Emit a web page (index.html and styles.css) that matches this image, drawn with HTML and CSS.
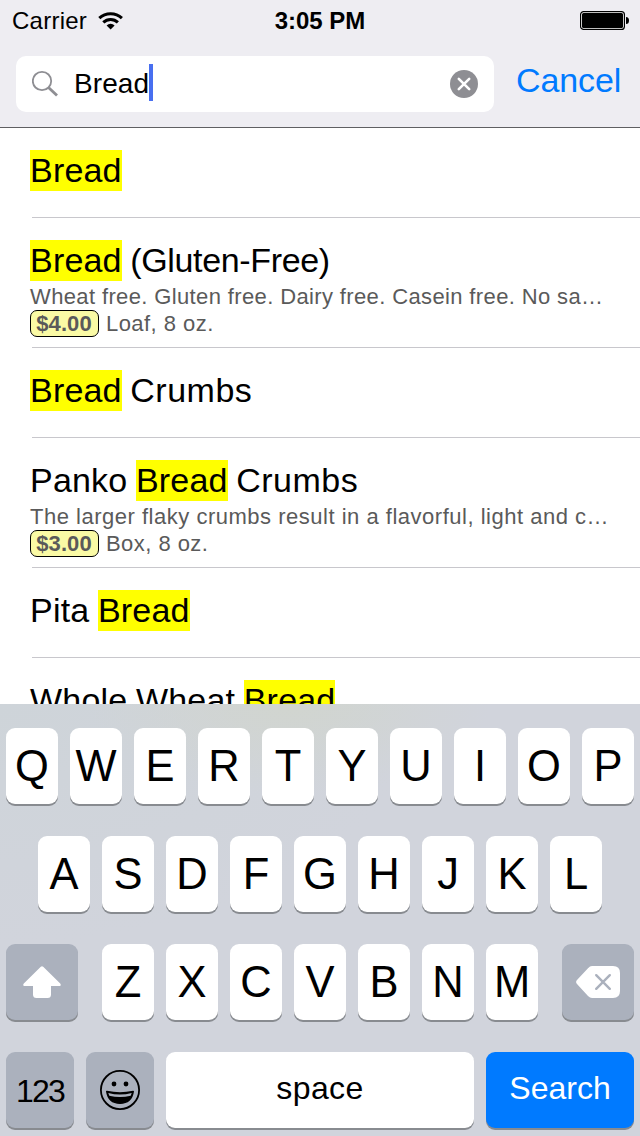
FILE: index.html
```html
<!DOCTYPE html>
<html lang="en">
<head>
<meta charset="utf-8">
<title>Search</title>
<link rel="stylesheet" href="styles.css">
</head>
<body>
<div class="screen">
  <header class="top">
    <div class="status">
      <div class="carrier"><span>Carrier</span>
        <svg class="wifi" width="26" height="20" viewBox="0 0 26 20"><g fill="none" stroke="#000" stroke-width="3"><path d="M1.3 7.2A16.3 16.3 0 0 1 23.9 7.2"/><path d="M5.3 11.4A10.4 10.4 0 0 1 19.9 11.4"/></g><path d="M8.6 14.4A5.7 5.7 0 0 1 16.6 14.4L12.6 18.6Z"/></svg>
      </div>
      <div class="time">3:05 PM</div>
      <svg class="battery" width="50" height="20" viewBox="0 0 50 20"><rect x=".6" y=".6" width="43.8" height="17.8" rx="3" fill="#fff" stroke="#000" stroke-width="1.2"/><rect x="2" y="2" width="41" height="15" rx="1.5"/><path d="M46 6Q49 6 49 9.5T46 13Z"/></svg>
    </div>
    <div class="search-row">
      <div class="field">
        <svg class="glass" width="28" height="28" viewBox="0 0 28 28" fill="none" stroke="#8e8e93"><circle cx="10" cy="11" r="9.2" stroke-width="1.8"/><path d="M16.5 17.5L25 25.5" stroke-width="2.8"/></svg>
        <span class="query">Bread</span><span class="caret"></span>
        <svg class="clear" width="28" height="28" viewBox="0 0 28 28"><circle cx="14" cy="14" r="14" fill="#8e8e93"/><path d="M8.8 8.8L19.2 19.2M19.2 8.8L8.8 19.2" stroke="#fff" stroke-width="2.6" stroke-linecap="round"/></svg>
      </div>
      <span class="cancel">Cancel</span>
    </div>
  </header>
  <ul class="results">
    <li class="item"><div class="title"><mark>Bread</mark></div></li>
    <li class="item tall">
      <div class="title"><mark>Bread</mark> <span class="snug">(Gluten-Free)</span></div>
      <div class="note note-snug">Wheat free. Gluten free. Dairy free. Casein free. No sa…</div>
      <div class="info"><span class="price">$4.00</span><span>Loaf, 8 oz.</span></div>
    </li>
    <li class="item"><div class="title"><mark>Bread</mark> <span class="loose">Crumbs</span></div></li>
    <li class="item tall">
      <div class="title">Panko <mark>Bread</mark> <span class="loose">Crumbs</span></div>
      <div class="note">The larger flaky crumbs result in a flavorful, light and c…</div>
      <div class="info"><span class="price">$3.00</span><span>Box, 8 oz.</span></div>
    </li>
    <li class="item"><div class="title">Pita <mark>Bread</mark></div></li>
    <li class="item"><div class="title">Whole Wheat <mark>Bread</mark></div></li>
  </ul>
  <div class="keyboard">
    <div class="keys"><span class="key">Q</span><span class="key">W</span><span class="key">E</span><span class="key">R</span><span class="key">T</span><span class="key">Y</span><span class="key">U</span><span class="key">I</span><span class="key">O</span><span class="key">P</span></div>
    <div class="keys"><span class="key">A</span><span class="key">S</span><span class="key">D</span><span class="key">F</span><span class="key">G</span><span class="key">H</span><span class="key">J</span><span class="key">K</span><span class="key">L</span></div>
    <div class="keys spread">
      <span class="key wide gray"><svg width="38" height="32" viewBox="0 0 38 32"><path fill="#fff" d="M17.8 .8Q19 -.3 20.2 .8L37.2 17.6Q38.6 19.6 36.6 20H28V28.5Q28 32 24.5 32H13.5Q10 32 10 28.5V20H1.4Q-.6 19.6 .8 17.6Z"/></svg></span>
      <div class="letters"><span class="key">Z</span><span class="key">X</span><span class="key">C</span><span class="key">V</span><span class="key">B</span><span class="key">N</span><span class="key">M</span></div>
      <span class="key wide gray"><svg width="44" height="32" viewBox="0 0 44 32"><path fill="#fff" d="M16 0H37Q44 0 44 7V25Q44 32 37 32H16Q14 32 12 30L1 18Q-.8 16 1 14L12 2.2Q14 0 16 0Z"/><path d="M20.2 9.2L33.8 22.8M33.8 9.2L20.2 22.8" stroke="#abb1bd" stroke-width="2.4" stroke-linecap="round"/></svg></span>
    </div>
    <div class="keys bottom">
      <span class="key gray num">123</span>
      <span class="key gray"><svg width="40" height="40" viewBox="0 0 40 40"><circle cx="20" cy="20" r="19.1" fill="none" stroke="#000" stroke-width="1.8"/><circle cx="14" cy="14" r="2.4"/><circle cx="26" cy="14" r="2.4"/><path d="M6.8 21.5Q20 24.5 33.2 21.5Q31.5 33.2 20 33.2T6.8 21.5Z" fill="#000" stroke="#000" stroke-width="1.6" stroke-linejoin="round"/><path d="M8.3 23Q20 26.2 31.7 23L30.7 25.7Q20 28.4 9.3 25.7Z" fill="#abb1bd"/></svg></span>
      <span class="key space">space</span>
      <span class="key go">Search</span>
    </div>
  </div>
</div>
</body>
</html>
```
FILE: styles.css
```css
* { box-sizing: border-box; }
body { margin: 0; font-family: "Liberation Sans", Arial, sans-serif; color: #000; }
.screen { display: flex; flex-direction: column; width: 640px; height: 1136px; overflow: hidden; background: #fff; }
.top { flex: none; height: 128px; background: #eeedf2; border-bottom: 1px solid #5f5f62; }
.status { display: grid; grid-template-columns: 1fr auto 1fr; height: 40px; padding: 0 10px 0 12px; align-items: center; font-size: 24px; }
.carrier { display: flex; align-items: center; gap: 11px; letter-spacing: .25px; line-height: 42px; }
.wifi { margin-top: -1px; }
.time { font-weight: bold; line-height: 42px; margin-left: -2px; }
.battery { justify-self: end; }
.search-row { display: flex; margin-top: 16px; padding-left: 16px; }
.field { display: flex; align-items: center; width: 478px; height: 56px; padding: 0 16px; border-radius: 10px; background: #fff; }
.query { margin-left: 14px; font-size: 28px; letter-spacing: .1px; }
.caret { width: 4px; height: 37px; margin: -3px 0 0 0; background: #486ff0; }
.clear { margin-left: auto; }
.cancel { margin-left: 22px; font-size: 34px; letter-spacing: -.1px; line-height: 49px; color: #007aff; }
.results { flex: none; height: 576px; margin: 0; padding: 0; overflow: hidden; list-style: none; }
.item { height: 90px; padding: 22px 0 0 30px; background: linear-gradient(#c8c7cc, #c8c7cc) 32px 100% / 100% 1px no-repeat; }
.tall { height: 130px; }
.title { height: 41px; font-size: 34px; line-height: 41px; letter-spacing: .2px; word-spacing: -1.1px; white-space: nowrap; }
.snug { letter-spacing: -.35px; }
.loose { letter-spacing: .5px; }
mark { display: inline-block; background: #ff0; color: inherit; }
.note { margin-top: 2px; height: 27px; font-size: 22px; line-height: 27px; letter-spacing: .51px; color: #5a5a5a; white-space: nowrap; }
.note-snug { letter-spacing: .37px; }
.info { display: flex; gap: 7px; height: 27px; font-size: 22px; line-height: 27px; letter-spacing: .45px; color: #5a5a5a; }
.price { width: 69px; height: 27px; padding-right: 1px; border: 1px solid #000; border-radius: 7px; background: #fafaa5; font-weight: bold; letter-spacing: .1px; line-height: 25px; text-align: center; }
.keyboard { flex: 1; display: flex; flex-direction: column; gap: 32px; padding: 24px 6px 0; background: radial-gradient(ellipse 200px 90px at 290px 0, #d1d5cf, transparent), radial-gradient(ellipse 420px 240px at 0 0, #ced4d9, transparent); background-color: #d1d4dc; }
.keys, .letters { display: flex; justify-content: center; gap: 12px; }
.spread { justify-content: space-between; }
.key { display: flex; align-items: center; justify-content: center; width: 52px; height: 76px; border-radius: 9px; background: #fff; box-shadow: 0 2px 0 #888b90; font-size: 43.5px; line-height: 80px; }
.wide { width: 72px; }
.gray { background: #abb1bd; }
.bottom .key { width: 68px; font-size: 32px; line-height: 72px; }
.bottom .num { letter-spacing: -1.8px; padding-top: 2px; }
.bottom .space { width: 308px; letter-spacing: .4px; padding-bottom: 4px; }
.bottom .go { width: 148px; padding-bottom: 4px; background: #007aff; color: #fff; }
```
